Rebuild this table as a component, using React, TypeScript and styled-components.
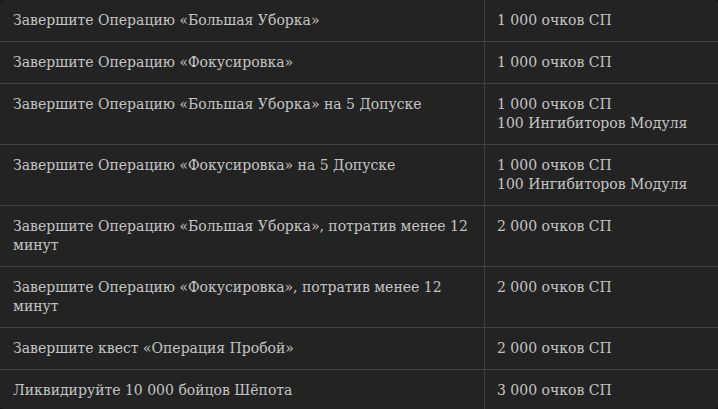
import React from 'react';
import styled, {createGlobalStyle} from "styled-components";

const GlobalStyle = createGlobalStyle`
    body {
      margin: 0;
      background-color: #141414;
      font-family: "DejaVu Serif", "Liberation Serif", serif;
    }
`;

const Wrapper = styled.div`
    width: 718px;
    height: 409px;
    overflow: hidden;
    border-radius: 4px;
    background-color: #232323;
`;

const Table = styled.table`
    width: 100%;
    border-collapse: collapse;
    color: #c3c3c3;
    font-size: 14px;
    line-height: 19px;
`;

const Row = styled.tr`
    border-bottom: 1px solid #3f3f3f;
`;

const Task = styled.td`
    width: 458px;
    padding: 11px 13px;
    vertical-align: top;
    border-right: 1px solid #3f3f3f;
`;

const Reward = styled.td`
    padding: 11px 12px;
    vertical-align: top;
`;

const rows = [
    {task: "Завершите Операцию «Большая Уборка»", reward: ["1 000 очков СП"]},
    {task: "Завершите Операцию «Фокусировка»", reward: ["1 000 очков СП"]},
    {task: "Завершите Операцию «Большая Уборка» на 5 Допуске", reward: ["1 000 очков СП", "100 Ингибиторов Модуля"]},
    {task: "Завершите Операцию «Фокусировка» на 5 Допуске", reward: ["1 000 очков СП", "100 Ингибиторов Модуля"]},
    {task: "Завершите Операцию «Большая Уборка», потратив менее 12 минут", reward: ["2 000 очков СП"]},
    {task: "Завершите Операцию «Фокусировка», потратив менее 12 минут", reward: ["2 000 очков СП"]},
    {task: "Завершите квест «Операция Пробой»", reward: ["2 000 очков СП"]},
    {task: "Ликвидируйте 10 000 бойцов Шёпота", reward: ["3 000 очков СП"]},
];

function App() {
  return (
      <>
          <GlobalStyle/>
          <Wrapper>
              <Table>
                  <tbody>
                  {rows.map((r, i) => (
                      <Row key={i}>
                          <Task>{r.task}</Task>
                          <Reward>
                              {r.reward.map((line, j) => <div key={j}>{line}</div>)}
                          </Reward>
                      </Row>
                  ))}
                  </tbody>
              </Table>
          </Wrapper>
      </>
  );
}

export default App;
